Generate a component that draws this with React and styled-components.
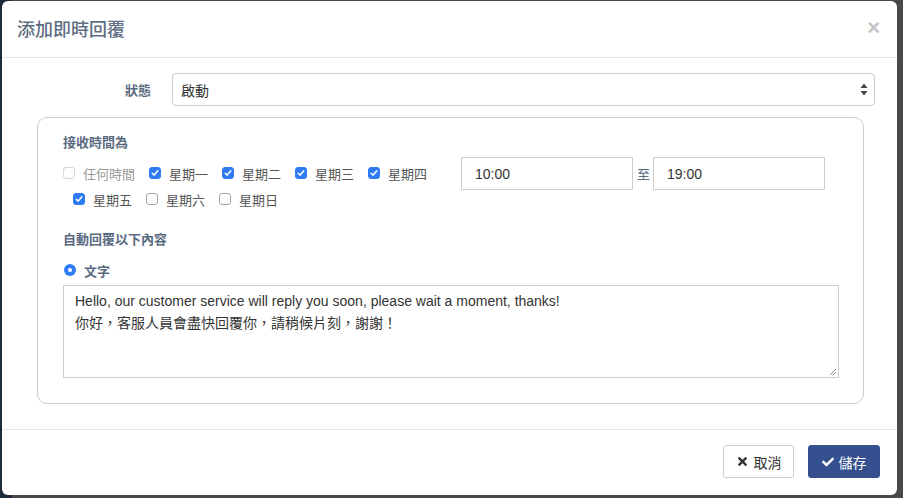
import React from "react";
import styled, { createGlobalStyle } from "styled-components";
import { FaTimes, FaCheck } from "react-icons/fa";

const GlobalStyle = createGlobalStyle`
  html, body {
    margin: 0;
    padding: 0;
  }
  body {
    font-family: "Liberation Sans", "Noto Sans CJK TC", sans-serif;
    font-size: 14px;
    color: #333;
  }
  * {
    box-sizing: border-box;
  }
`;

const days = [
  { label: "任何時間", checked: false, disabled: true },
  { label: "星期一", checked: true },
  { label: "星期二", checked: true },
  { label: "星期三", checked: true },
  { label: "星期四", checked: true },
  { label: "星期五", checked: true },
  { label: "星期六", checked: false },
  { label: "星期日", checked: false },
];

const App = () => {
  return (
    <>
      <GlobalStyle />
      <Backdrop>
        <Modal>
          <Header>
            <Title>添加即時回覆</Title>
            <Close>×</Close>
          </Header>

          <Body>
            <FormRow>
              <FormLabel>狀態</FormLabel>
              <Select>
                <span>啟動</span>
                <svg width="8" height="13" viewBox="0 0 8 13">
                  <path d="M4 0.5 L7.5 5 L0.5 5 Z" fill="#444" />
                  <path d="M4 12.5 L7.5 8 L0.5 8 Z" fill="#444" />
                </svg>
              </Select>
            </FormRow>

            <Fieldset>
              <SectionTitle>接收時間為</SectionTitle>
              <TimeRow>
                <CheckGroup>
                  {days.map((d, i) => (
                    <CheckItem key={d.label} $first={i === 0} $disabled={d.disabled}>
                      <CheckBox $checked={d.checked} $disabled={d.disabled}>
                        {d.checked && (
                          <svg width="8" height="8" viewBox="0 0 8 8">
                            <path
                              d="M1.2 4.2 L3.2 6.1 L6.8 1.8"
                              fill="none"
                              stroke="#fff"
                              strokeWidth="1.5"
                              strokeLinecap="round"
                              strokeLinejoin="round"
                            />
                          </svg>
                        )}
                      </CheckBox>
                      {d.label}
                    </CheckItem>
                  ))}
                </CheckGroup>
                <TimeInput>10:00</TimeInput>
                <To>至</To>
                <TimeInput>19:00</TimeInput>
              </TimeRow>

              <SectionTitle $top={17}>自動回覆以下內容</SectionTitle>
              <RadioRow>
                <Radio />
                <span>文字</span>
              </RadioRow>
              <TextArea>
                Hello, our customer service will reply you soon, please wait a moment, thanks!
                <br />
                你好，客服人員會盡快回覆你，請稍候片刻，謝謝！
                <Grip viewBox="0 0 8 8" width="8" height="8">
                  <path d="M7 1 L1 7 M7 4 L4 7" stroke="#888" strokeWidth="1" />
                </Grip>
              </TextArea>
            </Fieldset>
          </Body>

          <Footer>
            <Button>
              <FaTimes size={13} />
              取消
            </Button>
            <Button $primary>
              <FaCheck size={12} />
              儲存
            </Button>
          </Footer>
        </Modal>
      </Backdrop>
    </>
  );
};

const Backdrop = styled.div`
  width: 903px;
  height: 498px;
  background: linear-gradient(to right, #1d2a3c 0 12px, #484848 12px);
  padding: 1px 0 0 2px;
  overflow: hidden;
`;

const Modal = styled.div`
  width: 895px;
  height: 494px;
  background: #fff;
  border-radius: 6px;
  display: flex;
  flex-direction: column;
`;

const Header = styled.div`
  height: 57px;
  border-bottom: 1px solid #e5e5e5;
  padding: 0 17px 2px 15px;
  display: flex;
  align-items: center;
  justify-content: space-between;
`;

const Title = styled.div`
  font-family: "Noto Sans CJK TC", sans-serif;
  font-size: 18px;
  font-weight: 500;
  color: #5e6e82;
`;

const Close = styled.div`
  font-size: 22px;
  font-weight: 700;
  color: #c4c4c4;
  line-height: 1;
`;

const Body = styled.div`
  flex: 1;
  padding: 15px 15px 25px;
`;

const FormRow = styled.div`
  display: flex;
  align-items: center;
`;

const FormLabel = styled.div`
  width: 155px;
  padding-right: 21px;
  text-align: right;
  font-size: 13px;
  font-weight: 700;
  color: #5a6b80;
  font-family: "Noto Sans CJK TC", sans-serif;
`;

const Select = styled.div`
  width: 703px;
  height: 33px;
  border: 1px solid #ccc;
  border-radius: 4px;
  padding: 0 6px 0 8px;
  display: flex;
  align-items: center;
  justify-content: space-between;
  font-size: 14px;
  color: #333;
`;

const Fieldset = styled.div`
  margin: 11px 0 0 20px;
  width: 827px;
  height: 287px;
  border: 1px solid #ccc;
  border-radius: 10px;
  padding: 14px 25px 0;
`;

const SectionTitle = styled.div`
  margin-top: ${(p) => p.$top || 0}px;
  line-height: 20px;
  font-size: 13px;
  font-weight: 700;
  color: #5a6b80;
  font-family: "Noto Sans CJK TC", sans-serif;
`;

const TimeRow = styled.div`
  display: flex;
  align-items: flex-start;
  margin-top: 5px;
`;

const CheckGroup = styled.div`
  width: 398px;
  margin-top: 3px;
  padding-left: 10px;
  display: flex;
  flex-wrap: wrap;
`;

const CheckItem = styled.label`
  display: inline-flex;
  align-items: center;
  height: 26px;
  margin-right: 14px;
  margin-left: ${(p) => (p.$first ? "-10px" : "0")};
  font-size: 13px;
  color: ${(p) => (p.$disabled ? "#9a9a9a" : "#555")};
  font-family: "Noto Sans CJK TC", sans-serif;
`;

const CheckBox = styled.span`
  width: 12px;
  height: 12px;
  margin-right: 8px;
  border-radius: 3px;
  display: flex;
  align-items: center;
  justify-content: center;
  background: ${(p) => (p.$checked ? "#2f7bf5" : "#fff")};
  border: 1px solid
    ${(p) => (p.$checked ? "#2f7bf5" : p.$disabled ? "#d4d4d4" : "#a6a6a6")};
`;

const TimeInput = styled.div`
  width: 172px;
  height: 33px;
  border: 1px solid #ccc;
  padding-left: 13px;
  display: flex;
  align-items: center;
  font-size: 14px;
  color: #333;
`;

const To = styled.span`
  margin: 7px 3px 0 4px;
  font-size: 13px;
  color: #5a6b80;
  font-family: "Noto Sans CJK TC", sans-serif;
`;

const RadioRow = styled.div`
  margin-top: 11px;
  height: 20px;
  display: flex;
  align-items: center;
  font-size: 13px;
  font-weight: 700;
  color: #5a6b80;
  font-family: "Noto Sans CJK TC", sans-serif;
`;

const Radio = styled.span`
  width: 12px;
  height: 12px;
  margin: 0 8px 0 1px;
  border-radius: 50%;
  background: #2f7bf5;
  display: flex;
  align-items: center;
  justify-content: center;

  &::after {
    content: "";
    width: 4px;
    height: 4px;
    border-radius: 50%;
    background: #fff;
  }
`;

const TextArea = styled.div`
  position: relative;
  margin-top: 5px;
  width: 776px;
  height: 93px;
  border: 1px solid #ccc;
  padding: 4px 11px;
  font-size: 14px;
  line-height: 22px;
  color: #333;
`;

const Grip = styled.svg`
  position: absolute;
  right: 1px;
  bottom: 1px;
`;

const Footer = styled.div`
  height: 66px;
  border-top: 1px solid #e5e5e5;
  padding: 15px 17px 0 0;
  display: flex;
  justify-content: flex-end;
  gap: 14px;
`;

const Button = styled.div`
  width: ${(p) => (p.$primary ? "72px" : "71px")};
  height: 33px;
  border-radius: 3px;
  display: flex;
  align-items: center;
  justify-content: center;
  gap: 5px;
  font-size: 14px;
  font-family: "Noto Sans CJK TC", sans-serif;
  background: ${(p) => (p.$primary ? "#34508f" : "#fff")};
  color: ${(p) => (p.$primary ? "#fff" : "#333")};
  border: 1px solid ${(p) => (p.$primary ? "#34508f" : "#ccc")};
`;

export default App;
